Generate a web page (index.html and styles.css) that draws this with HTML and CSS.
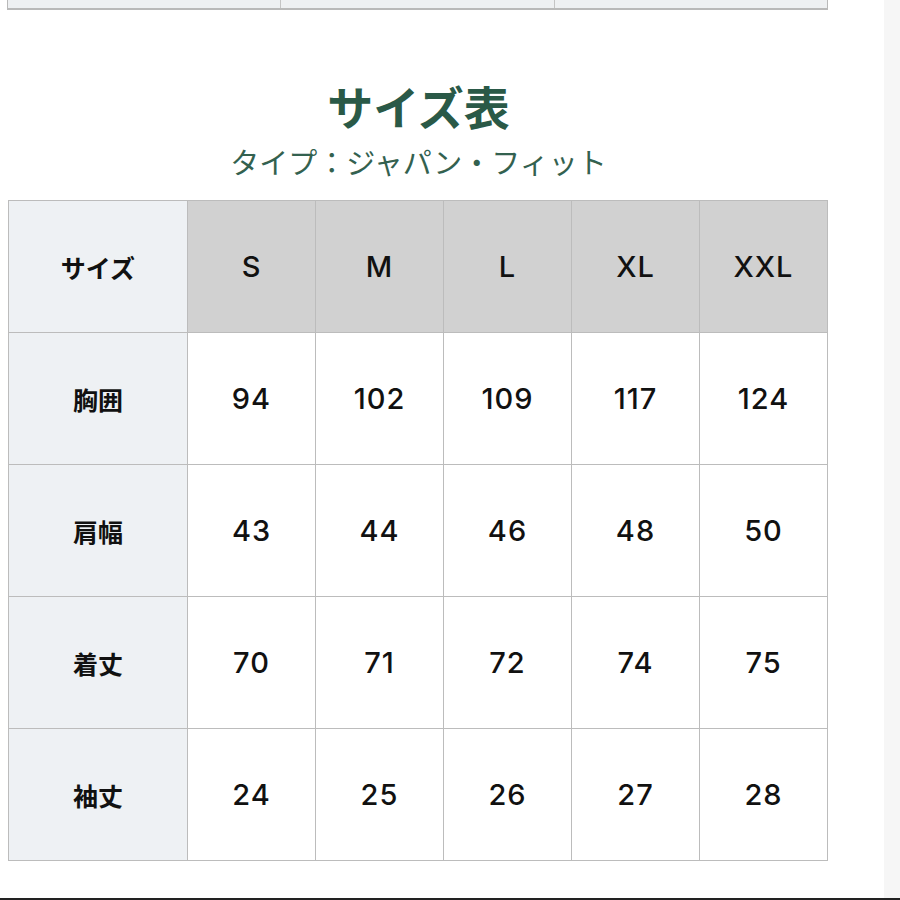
FILE: index.html
```html
<!DOCTYPE html>
<html lang="ja">
<head>
<meta charset="utf-8">
<link rel="stylesheet" href="styles.css">
</head>
<body>
<div class="page">
  <main class="content">
    <div class="prev-table">
      <div class="prev-cell"></div>
      <div class="prev-cell"></div>
      <div class="prev-cell"></div>
    </div>
    <header class="heading">
      <h1 class="title">サイズ表</h1>
      <p class="subtitle">タイプ：ジャパン・フィット</p>
    </header>
    <table class="size-table">
      <thead>
        <tr>
          <th class="label">サイズ</th>
          <th class="size">S</th>
          <th class="size">M</th>
          <th class="size">L</th>
          <th class="size">XL</th>
          <th class="size">XXL</th>
        </tr>
      </thead>
      <tbody>
        <tr><th class="label">胸囲</th><td>94</td><td>102</td><td>109</td><td>117</td><td>124</td></tr>
        <tr><th class="label">肩幅</th><td>43</td><td>44</td><td>46</td><td>48</td><td>50</td></tr>
        <tr><th class="label">着丈</th><td>70</td><td>71</td><td>72</td><td>74</td><td>75</td></tr>
        <tr><th class="label">袖丈</th><td>24</td><td>25</td><td>26</td><td>27</td><td>28</td></tr>
      </tbody>
    </table>
  </main>
  <aside class="scroll-strip"></aside>
</div>
<div class="bottom-bar"></div>
</body>
</html>
```
FILE: styles.css
```css
html, body {
  margin: 0;
  padding: 0;
  background: #ffffff;
}
body {
  font-family: "Noto Sans CJK JP", "Noto Sans", sans-serif;
  color: #111;
  height: 900px;
  overflow: hidden;
}
.page {
  display: flex;
  height: 898px;
}
.content {
  width: 884px;
  padding-left: 8px;
  box-sizing: border-box;
}
.scroll-strip {
  flex: 1;
  background: #f6f6f6;
}
.prev-table {
  display: flex;
  width: 821px;
  height: 10px;
  border-left: 1px solid #b9b9b9;
  border-bottom: 2px solid #b9b9b9;
  border-right: 1px solid #b9b9b9;
  box-sizing: border-box;
  margin-left: -1px;
}
.prev-cell {
  flex: 1;
  background: #eef0f2;
  border-right: 1px solid #c4c4c4;
}
.prev-cell:last-child {
  border-right: none;
}
.heading {
  width: 821px;
  text-align: center;
  padding-top: 65px;
}
.title {
  margin: 0;
  font-size: 46px;
  line-height: 60px;
  font-weight: 700;
  color: #2a5947;
}
.subtitle {
  margin: 6px 0 0;
  font-size: 29px;
  line-height: 40px;
  font-weight: 400;
  color: #33614f;
}
.size-table {
  margin-top: 19px;
  border-collapse: collapse;
  table-layout: fixed;
}
.size-table th,
.size-table td {
  border: 1px solid #bcbcbc;
  height: 132px;
  padding: 0;
  text-align: center;
  vertical-align: middle;
  box-sizing: border-box;
}
.size-table .label {
  width: 179px;
  background: #eef1f4;
  font-size: 25px;
  font-weight: 700;
  color: #111;
}
.size-table .size,
.size-table td {
  width: 128px;
  font-family: "Inter", "Liberation Sans", sans-serif;
  font-size: 29px;
  font-weight: 500;
  color: #111;
  letter-spacing: 1px;
}
.size-table .size {
  background: #d1d1d1;
}
.size-table td {
  background: #ffffff;
}
.bottom-bar {
  height: 2px;
  background: #222;
}
```
